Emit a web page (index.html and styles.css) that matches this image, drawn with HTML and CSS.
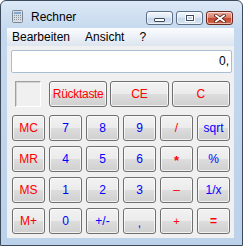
FILE: index.html
```html
<!DOCTYPE html>
<html lang="de">
<head>
    <meta charset="UTF-8">
    <title>Rechner</title>
    <link rel="stylesheet" href="styles.css">
</head>
<body>
    <div class="window">
        <!-- Title bar -->
        <div class="titlebar">
            <svg class="app-icon" width="11" height="13" viewBox="0 0 11 13">
                <rect x="0.5" y="0.5" width="10" height="12" rx="1" fill="#d8dde3" stroke="#7d8792"/>
                <rect x="2" y="2" width="7" height="2" fill="#7fa8d6"/>
                <g fill="#8a939d">
                    <rect x="2" y="5" width="1" height="1"/><rect x="4" y="5" width="1" height="1"/><rect x="6" y="5" width="1" height="1"/><rect x="8" y="5" width="1" height="1"/>
                    <rect x="2" y="7" width="1" height="1"/><rect x="4" y="7" width="1" height="1"/><rect x="6" y="7" width="1" height="1"/><rect x="8" y="7" width="1" height="1"/>
                    <rect x="2" y="9" width="1" height="1"/><rect x="4" y="9" width="1" height="1"/><rect x="6" y="9" width="1" height="1"/><rect x="8" y="9" width="1" height="1"/>
                </g>
            </svg>
            <span class="title">Rechner</span>
            <div class="caption">
                <span class="cap"><span class="glyph-min"></span></span>
                <span class="cap"><span class="glyph-max"></span></span>
                <span class="cap cap-close">
                    <svg width="12" height="9" viewBox="0 0 12 9">
                        <path d="M2 1.5 L10 7.5 M10 1.5 L2 7.5" stroke="#5a2018" stroke-width="3.4" stroke-linecap="square"/>
                        <path d="M2 1.5 L10 7.5 M10 1.5 L2 7.5" stroke="#ffffff" stroke-width="1.8" stroke-linecap="square"/>
                    </svg>
                </span>
            </div>
        </div>

        <!-- Client area -->
        <div class="client">
            <div class="menubar">
                <span>Bearbeiten</span>
                <span>Ansicht</span>
                <span>?</span>
            </div>

            <div class="content">
                <div class="display">0,</div>

                <div class="toprow">
                    <div class="memory"></div>
                    <div class="edit-keys">
                        <button class="key red narrow">Rücktaste</button>
                        <button class="key red">CE</button>
                        <button class="key red">C</button>
                    </div>
                </div>

                <div class="keys">
                    <button class="key red">MC</button>
                    <button class="key blue">7</button>
                    <button class="key blue">8</button>
                    <button class="key blue">9</button>
                    <button class="key red">/</button>
                    <button class="key blue">sqrt</button>

                    <button class="key red">MR</button>
                    <button class="key blue">4</button>
                    <button class="key blue">5</button>
                    <button class="key blue">6</button>
                    <button class="key red star">*</button>
                    <button class="key blue">%</button>

                    <button class="key red">MS</button>
                    <button class="key blue">1</button>
                    <button class="key blue">2</button>
                    <button class="key blue">3</button>
                    <button class="key red">–</button>
                    <button class="key blue">1/x</button>

                    <button class="key red">M+</button>
                    <button class="key blue">0</button>
                    <button class="key blue">+/-</button>
                    <button class="key blue comma">,</button>
                    <button class="key red small">+</button>
                    <button class="key red bold">=</button>
                </div>
            </div>
        </div>
    </div>
</body>
</html>
```

FILE: styles.css
```css
html, body {
    margin: 0;
    padding: 0;
    background: #ffffff;
    font-family: "Liberation Sans", Arial, sans-serif;
}

.window {
    width: 243px;
    height: 246px;
    box-sizing: border-box;
    border: 1px solid #3c4a5c;
    border-radius: 6px 6px 0 0;
    background: linear-gradient(#dce8f5, #c4d8ee 30px, #bcd2ea);
    display: flex;
    flex-direction: column;
}

/* Title bar */

.titlebar {
    height: 27px;
    box-sizing: border-box;
    padding: 4px 9px 0 11px;
    display: flex;
    align-items: center;
}

.app-icon {
    flex: none;
}

.title {
    margin-left: 8px;
    font-size: 12px;
    color: #000;
    flex: 1;
}

.caption {
    display: flex;
    gap: 3px;
    align-self: flex-start;
    margin-top: 6px;
}

.cap {
    width: 27px;
    height: 14px;
    box-sizing: border-box;
    border: 1px solid #5d6f87;
    border-radius: 3px;
    background: linear-gradient(#f3f7fc, #dbe6f2 50%, #c8d8ea 50%, #d6e3f1);
    box-shadow: inset 0 0 0 1px rgba(255, 255, 255, 0.55);
    display: flex;
    align-items: center;
    justify-content: center;
}

.glyph-min {
    width: 9px;
    height: 2px;
    margin-top: 4px;
    background: #fff;
    border: 1px solid #3b4a5e;
    border-radius: 1px;
}

.glyph-max {
    width: 6px;
    height: 4px;
    border: 1px solid #3b4a5e;
    box-shadow: 0 0 0 1px #fff, inset 0 0 0 1px #fff;
    background: #c8d6e8;
}

.cap-close {
    border-color: #6b2a20;
    background: linear-gradient(#eab0a2, #d97a68 50%, #c4432e 50%, #d3694d);
}

/* Client area */

.client {
    flex: 1;
    margin: 0 8px 7px 6px;
    background: #f0f0f0;
    display: flex;
    flex-direction: column;
}

.menubar {
    height: 18px;
    line-height: 18px;
    padding-left: 5px;
    display: flex;
    gap: 15px;
    font-size: 12px;
    color: #000;
    background: linear-gradient(#fbfcfe, #e9eef5 60%, #dde5ef);
}

.content {
    padding: 4px 2px 4px 4px;
}

.display {
    height: 23px;
    box-sizing: border-box;
    border: 1px solid #a9bed3;
    border-radius: 2px;
    background: #fff;
    text-align: right;
    padding-right: 2px;
    line-height: 21px;
    font-size: 12px;
    color: #000;
}

.toprow {
    margin: 8px 0 0 1px;
    display: grid;
    grid-template-columns: 33px 181px;
    column-gap: 4px;
    height: 26px;
}

.memory {
    width: 26px;
    height: 26px;
    box-sizing: border-box;
    margin-left: 3px;
    border: 1px solid;
    border-color: #a0a0a0 #ffffff #ffffff #a0a0a0;
    box-shadow: inset 1px 1px 0 #d4d4d4;
}

.edit-keys {
    display: grid;
    grid-template-columns: repeat(3, 1fr);
    column-gap: 3px;
}

.keys {
    margin: 8px 0 0 1px;
    display: grid;
    grid-template-columns: repeat(6, 33px);
    grid-auto-rows: 26px;
    column-gap: 4px;
    row-gap: 5px;
}

.key {
    margin: 0;
    padding: 0;
    box-sizing: border-box;
    height: 26px;
    border: 1px solid #6f6f6f;
    border-radius: 3px;
    background: linear-gradient(#f2f2f2, #ebebeb 50%, #dddddd 50%, #cfcfcf);
    box-shadow: inset 0 0 0 1px rgba(255, 255, 255, 0.7);
    font-family: "Liberation Sans", Arial, sans-serif;
    font-size: 12px;
    line-height: 1;
}

.red {
    color: #ff0000;
}

.blue {
    color: #0000ff;
}

.narrow {
    letter-spacing: -0.3px;
}

.star {
    font-weight: bold;
    font-size: 13px;
    padding-top: 3px;
}

.small {
    font-size: 11px;
}

.bold {
    font-weight: bold;
}

.comma {
    padding-top: 4px;
}
```
